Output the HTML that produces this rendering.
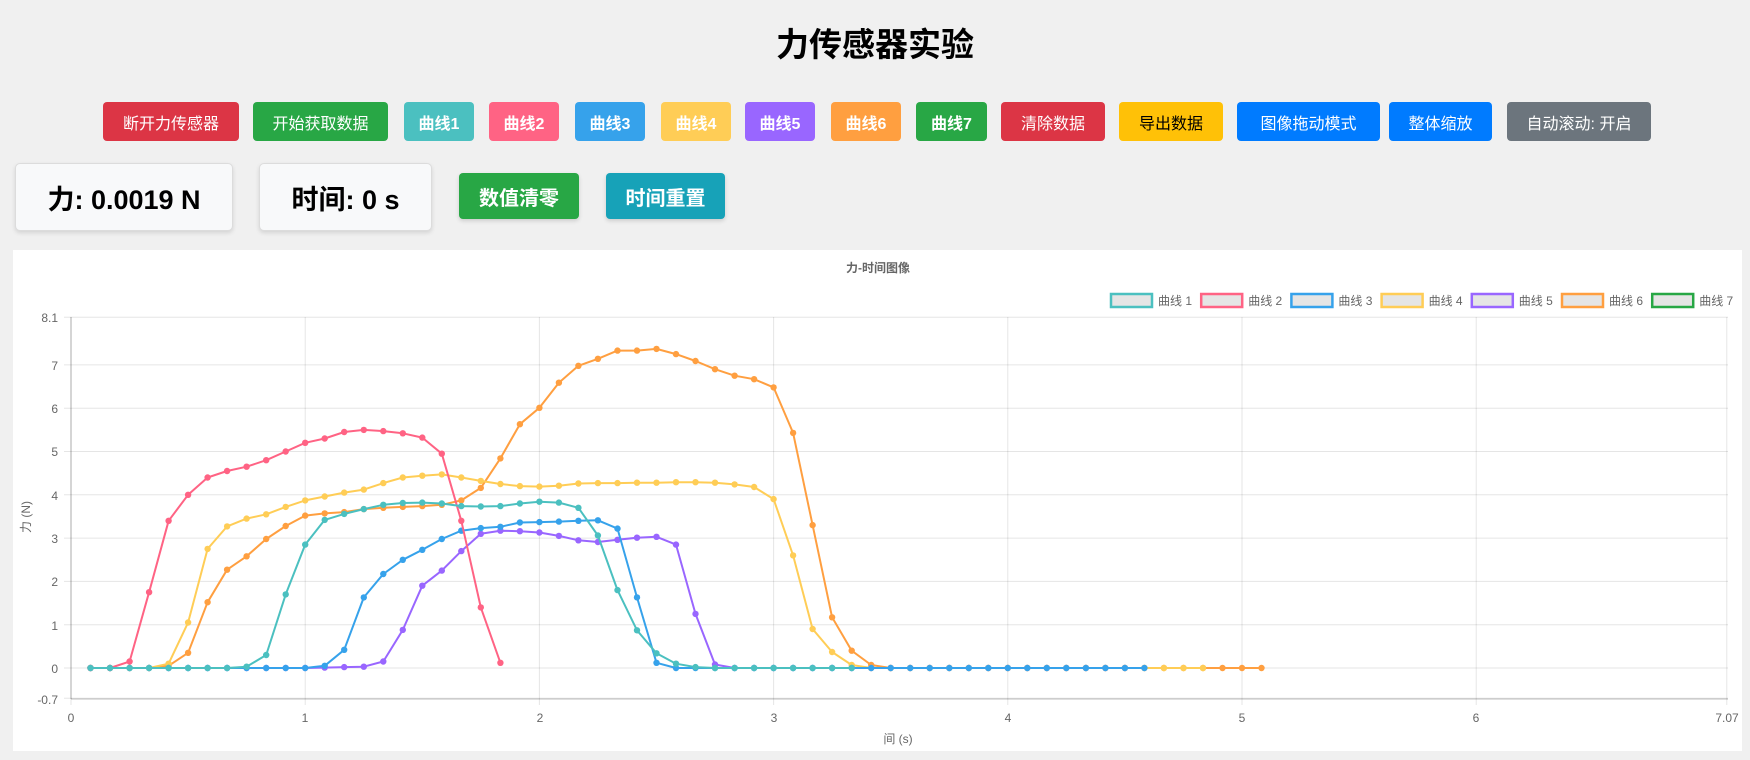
<!DOCTYPE html>
<html><head><meta charset="utf-8">
<style>
*{box-sizing:border-box;margin:0;padding:0}
body{width:1750px;height:760px;background:#f0f0f0;font-family:"Liberation Sans","Noto Sans CJK SC",sans-serif;position:relative;overflow:hidden}
h1{position:absolute;left:0;width:1750px;top:18px;text-align:center;font-size:33px;font-weight:bold;color:#000}
.b{position:absolute;top:102px;height:39px;border-radius:4px;color:#fff;font-size:16px;display:flex;align-items:center;justify-content:center;white-space:nowrap}
.c{font-weight:bold}
.box{position:absolute;top:163px;height:68px;background:#f8f9fa;border:1px solid #dcdcdc;border-radius:5px;box-shadow:0 2px 4px rgba(0,0,0,0.12);display:flex;align-items:center;justify-content:center;font-size:27px;font-weight:bold;color:#000}
.bb{position:absolute;top:173px;height:46px;border-radius:4px;color:#fff;font-size:20px;font-weight:bold;display:flex;align-items:center;justify-content:center;box-shadow:0 2px 4px rgba(0,0,0,0.15)}
svg{position:absolute;left:0;top:0}
svg text{font-family:"Liberation Sans","Noto Sans CJK SC",sans-serif}
</style></head><body>
<h1>力传感器实验</h1>
<div class="b" style="left:103px;width:136px;background:#dc3545">断开力传感器</div>
<div class="b" style="left:253px;width:135px;background:#28a745">开始获取数据</div>
<div class="b c" style="left:404px;width:70px;background:#4bc0c0">曲线1</div>
<div class="b c" style="left:489px;width:70px;background:#ff6384">曲线2</div>
<div class="b c" style="left:575px;width:70px;background:#36a2eb">曲线3</div>
<div class="b c" style="left:661px;width:70px;background:#ffcd56">曲线4</div>
<div class="b c" style="left:745px;width:70px;background:#9966ff">曲线5</div>
<div class="b c" style="left:831px;width:70px;background:#ff9f40">曲线6</div>
<div class="b c" style="left:916px;width:71px;background:#28a745">曲线7</div>
<div class="b" style="left:1001px;width:104px;background:#dc3545">清除数据</div>
<div class="b" style="left:1119px;width:104px;background:#ffc107;color:#000">导出数据</div>
<div class="b" style="left:1237px;width:143px;background:#007bff">图像拖动模式</div>
<div class="b" style="left:1389px;width:103px;background:#007bff">整体缩放</div>
<div class="b" style="left:1507px;width:144px;background:#6c757d">自动滚动: 开启</div>
<div class="box" style="left:15px;width:218px">力: 0.0019 N</div>
<div class="box" style="left:259px;width:173px">时间: 0 s</div>
<div class="bb" style="left:459px;width:120px;background:#28a745">数值清零</div>
<div class="bb" style="left:606px;width:119px;background:#17a2b8">时间重置</div>
<svg id="s" width="1750" height="760" xmlns="http://www.w3.org/2000/svg">
<rect x="13" y="250" width="1729" height="501" fill="#fff"/>
<text x="878" y="272" font-size="12" font-weight="bold" fill="#666" text-anchor="middle">力-时间图像</text>
<g id="grid"></g>
<g font-size="12" fill="#666">
<text x="58" y="322" text-anchor="end">8.1</text>
<text x="58" y="370" text-anchor="end">7</text>
<text x="58" y="413" text-anchor="end">6</text>
<text x="58" y="456" text-anchor="end">5</text>
<text x="58" y="500" text-anchor="end">4</text>
<text x="58" y="543" text-anchor="end">3</text>
<text x="58" y="586" text-anchor="end">2</text>
<text x="58" y="630" text-anchor="end">1</text>
<text x="58" y="673" text-anchor="end">0</text>
<text x="58" y="704" text-anchor="end">-0.7</text>
<text x="71" y="722" text-anchor="middle">0</text>
<text x="305" y="722" text-anchor="middle">1</text>
<text x="540" y="722" text-anchor="middle">2</text>
<text x="774" y="722" text-anchor="middle">3</text>
<text x="1008" y="722" text-anchor="middle">4</text>
<text x="1242" y="722" text-anchor="middle">5</text>
<text x="1476" y="722" text-anchor="middle">6</text>
<text x="1727" y="722" text-anchor="middle">7.07</text>
<text x="898" y="743" text-anchor="middle">间 (s)</text>
<text transform="translate(30,517) rotate(-90)" text-anchor="middle">力 (N)</text>
</g>
<g id="leg" font-size="12" fill="#666"></g>
<g id="data"></g>
</svg>
<script>
var X0=71,XS=234.2,Y0=668,YS=43.3;
function px(t){return X0+t*XS}function py(v){return Y0-v*YS}
var g='';
[8.1,7,6,5,4,3,2,1,0,-0.7].forEach(function(v){g+='<line x1="64" x2="1728" y1="'+py(v)+'" y2="'+py(v)+'" stroke="rgba(0,0,0,0.1)"/>'});
[0,1,2,3,4,5,6,7.07].forEach(function(t){g+='<line y1="317" y2="705" x1="'+px(t)+'" x2="'+px(t)+'" stroke="rgba(0,0,0,0.1)"/>'});
g+='<line x1="71" x2="71" y1="317" y2="699" stroke="rgba(0,0,0,0.25)"/><line x1="71" x2="1728" y1="699" y2="699" stroke="rgba(0,0,0,0.25)"/>';
document.getElementById('grid').innerHTML=g;
var cols=['#4bc0c0','#ff6384','#36a2eb','#ffcd56','#9966ff','#ff9f40','#28a745'];
var l='';for(var i=0;i<7;i++){var x=1111+i*90.2;l+='<rect x="'+x+'" y="294" width="41" height="13" fill="rgba(0,0,0,0.1)" stroke="'+cols[i]+'" stroke-width="2.5"/><text x="'+(x+47)+'" y="305">曲线 '+(i+1)+'</text>'}
document.getElementById('leg').innerHTML=l;
function pad(a,n){while(a.length<n)a.push(0);return a}
var D=[
pad([0,0,0,0,0,0,0,0,0.03,0.3,1.7,2.85,3.42,3.56,3.67,3.77,3.81,3.82,3.8,3.74,3.73,3.74,3.8,3.84,3.82,3.7,3.06,1.8,0.87,0.34,0.1,0.02],40),
[0,0,0.15,1.75,3.4,4.0,4.4,4.55,4.65,4.8,5.0,5.2,5.3,5.45,5.5,5.47,5.42,5.32,4.95,3.4,1.4,0.12],
pad([0,0,0,0,0,0,0,0,0,0,0,0,0.05,0.42,1.63,2.17,2.5,2.73,2.98,3.17,3.23,3.26,3.36,3.37,3.38,3.4,3.41,3.22,1.63,0.12,0],55),
pad([0,0,0,0,0.1,1.05,2.75,3.27,3.45,3.55,3.72,3.87,3.96,4.05,4.12,4.27,4.4,4.44,4.47,4.4,4.32,4.25,4.2,4.19,4.21,4.26,4.27,4.27,4.28,4.28,4.29,4.29,4.28,4.24,4.18,3.9,2.6,0.9,0.37,0.07],58),
pad([0,0,0,0,0,0,0,0,0,0,0,0,0.01,0.02,0.03,0.15,0.88,1.9,2.25,2.7,3.1,3.17,3.16,3.13,3.05,2.95,2.91,2.96,3.01,3.03,2.85,1.25,0.08],54),
pad([0,0,0,0,0.05,0.35,1.52,2.27,2.58,2.98,3.28,3.52,3.57,3.6,3.67,3.7,3.72,3.74,3.77,3.87,4.16,4.84,5.63,6.01,6.59,6.98,7.14,7.33,7.33,7.37,7.25,7.09,6.9,6.75,6.67,6.48,5.43,3.3,1.17,0.4,0.07],61)
];
var h='';
for(var d=D.length-1;d>=0;d--){var a=D[d],pts=[],c='';
for(var k=0;k<a.length;k++){var x=px((k+1)/12).toFixed(1),y=py(a[k]).toFixed(1);pts.push(x+','+y);c+='<circle cx="'+x+'" cy="'+y+'" r="3.2" fill="'+cols[d]+'"/>'}
h+='<polyline points="'+pts.join(' ')+'" fill="none" stroke="'+cols[d]+'" stroke-width="2" stroke-linejoin="round"/>'+c}
document.getElementById('data').innerHTML=h;
</script>
</body></html>
